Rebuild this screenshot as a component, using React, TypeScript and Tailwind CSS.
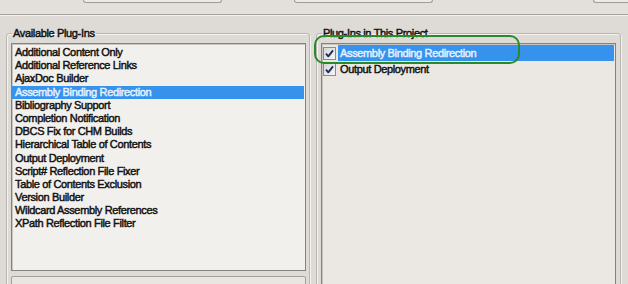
const AVAILABLE = [
  "Additional Content Only",
  "Additional Reference Links",
  "AjaxDoc Builder",
  "Assembly Binding Redirection",
  "Bibliography Support",
  "Completion Notification",
  "DBCS Fix for CHM Builds",
  "Hierarchical Table of Contents",
  "Output Deployment",
  "Script# Reflection File Fixer",
  "Table of Contents Exclusion",
  "Version Builder",
  "Wildcard Assembly References",
  "XPath Reflection File Filter",
];

const IN_PROJECT = ["Assembly Binding Redirection", "Output Deployment"];

function CheckBox() {
  return (
    <span className="w-[13px] h-[13px] shrink-0 border border-[#8a8b8c] bg-gradient-to-br from-[#d6d6d6] to-[#f7f7f7] flex items-center justify-center">
      <svg width="11" height="11" viewBox="0 0 11 11">
        <path d="M2 5.6 L4.3 8.3 L9 2.4" fill="none" stroke="#1f2f5c" strokeWidth="1.9" strokeLinejoin="round" />
      </svg>
    </span>
  );
}

export default function App() {
  const selected = "Assembly Binding Redirection";

  return (
    <div className="w-[628px] h-[284px] overflow-hidden bg-[#dedbd6] font-['Liberation_Sans',Arial,sans-serif] text-[11px] tracking-[-0.35px] text-[#111] [-webkit-text-stroke:0.45px]">
      {/* top strip with the bottoms of the fields above */}
      <div className="h-[15px] bg-[#e3e0dc] flex items-start border-b border-[#a6a29d]">
        <div className="ml-[83px] w-[139px] h-[3px] bg-[#eceae7] border-x border-b border-[#a09c97] rounded-b-[3px]" />
        <div className="ml-[72px] w-[139px] h-[3px] bg-[#eceae7] border-x border-b border-[#a09c97] rounded-b-[3px]" />
        <div className="ml-[160px] flex-1 h-[3px] bg-[#eceae7] border-l border-b border-[#a09c97] rounded-bl-[3px]" />
      </div>
      <div className="h-px bg-[#f3f1ee]" />

      <div className="relative flex gap-[6px] pl-[6px] pt-[11px]">
        {/* Available Plug-Ins */}
        <fieldset className="w-[304px] h-[300px] border border-[#bab6b1] rounded-[3px] pl-[4px] pr-[3px] shadow-[inset_1px_1px_0_#f4f2ef,1px_1px_0_#f4f2ef]">
          <legend className="ml-[1px] px-[1px] leading-[13px]">Available Plug-Ins</legend>
          <div className="mt-[3px] h-[228px] border border-[#85817c] bg-[#f2f0ed] pt-[2px] shadow-[inset_1px_1px_0_#c9c6c1]">
            {AVAILABLE.map((name) => (
              <div
                key={name}
                className={`h-[13.2px] leading-[13.2px] pl-[3px] whitespace-nowrap ${
                  name === selected ? "bg-[#3593ee] text-[#e6f1ff] mr-[1px]" : ""
                }`}
              >
                {name}
              </div>
            ))}
          </div>
          <div className="mt-[5px] h-[40px] border border-[#a29e99] bg-[#e9e6e2] rounded-[2px]" />
        </fieldset>

        {/* Plug-Ins in This Project */}
        <fieldset className="w-[305px] h-[300px] border border-[#bab6b1] rounded-[3px] pl-[4px] pr-[4px] shadow-[inset_1px_1px_0_#f4f2ef,1px_1px_0_#f4f2ef]">
          <legend className="ml-[1px] px-[1px] leading-[13px]">Plug-Ins in This Project</legend>
          <div className="mt-[3px] h-[260px] border border-[#85817c] bg-[#ebe8e4] pt-px shadow-[inset_1px_1px_0_#c9c6c1]">
            {IN_PROJECT.map((name) => (
              <div key={name} className="h-[16px] flex items-center pl-[1px]">
                <CheckBox />
                <span
                  className={`ml-[2px] h-full leading-[16px] pl-[2px] whitespace-nowrap ${
                    name === selected ? "flex-1 mr-[1px] bg-[#3593ee] text-[#e6f1ff]" : ""
                  }`}
                >
                  {name}
                </span>
              </div>
            ))}
          </div>
        </fieldset>

        {/* hand-drawn highlight */}
        <div className="absolute left-[314px] top-[19px] w-[206px] h-[29px] border-[2.5px] border-[#2a8a2a] rounded-[10px] pointer-events-none" />
      </div>
    </div>
  );
}
